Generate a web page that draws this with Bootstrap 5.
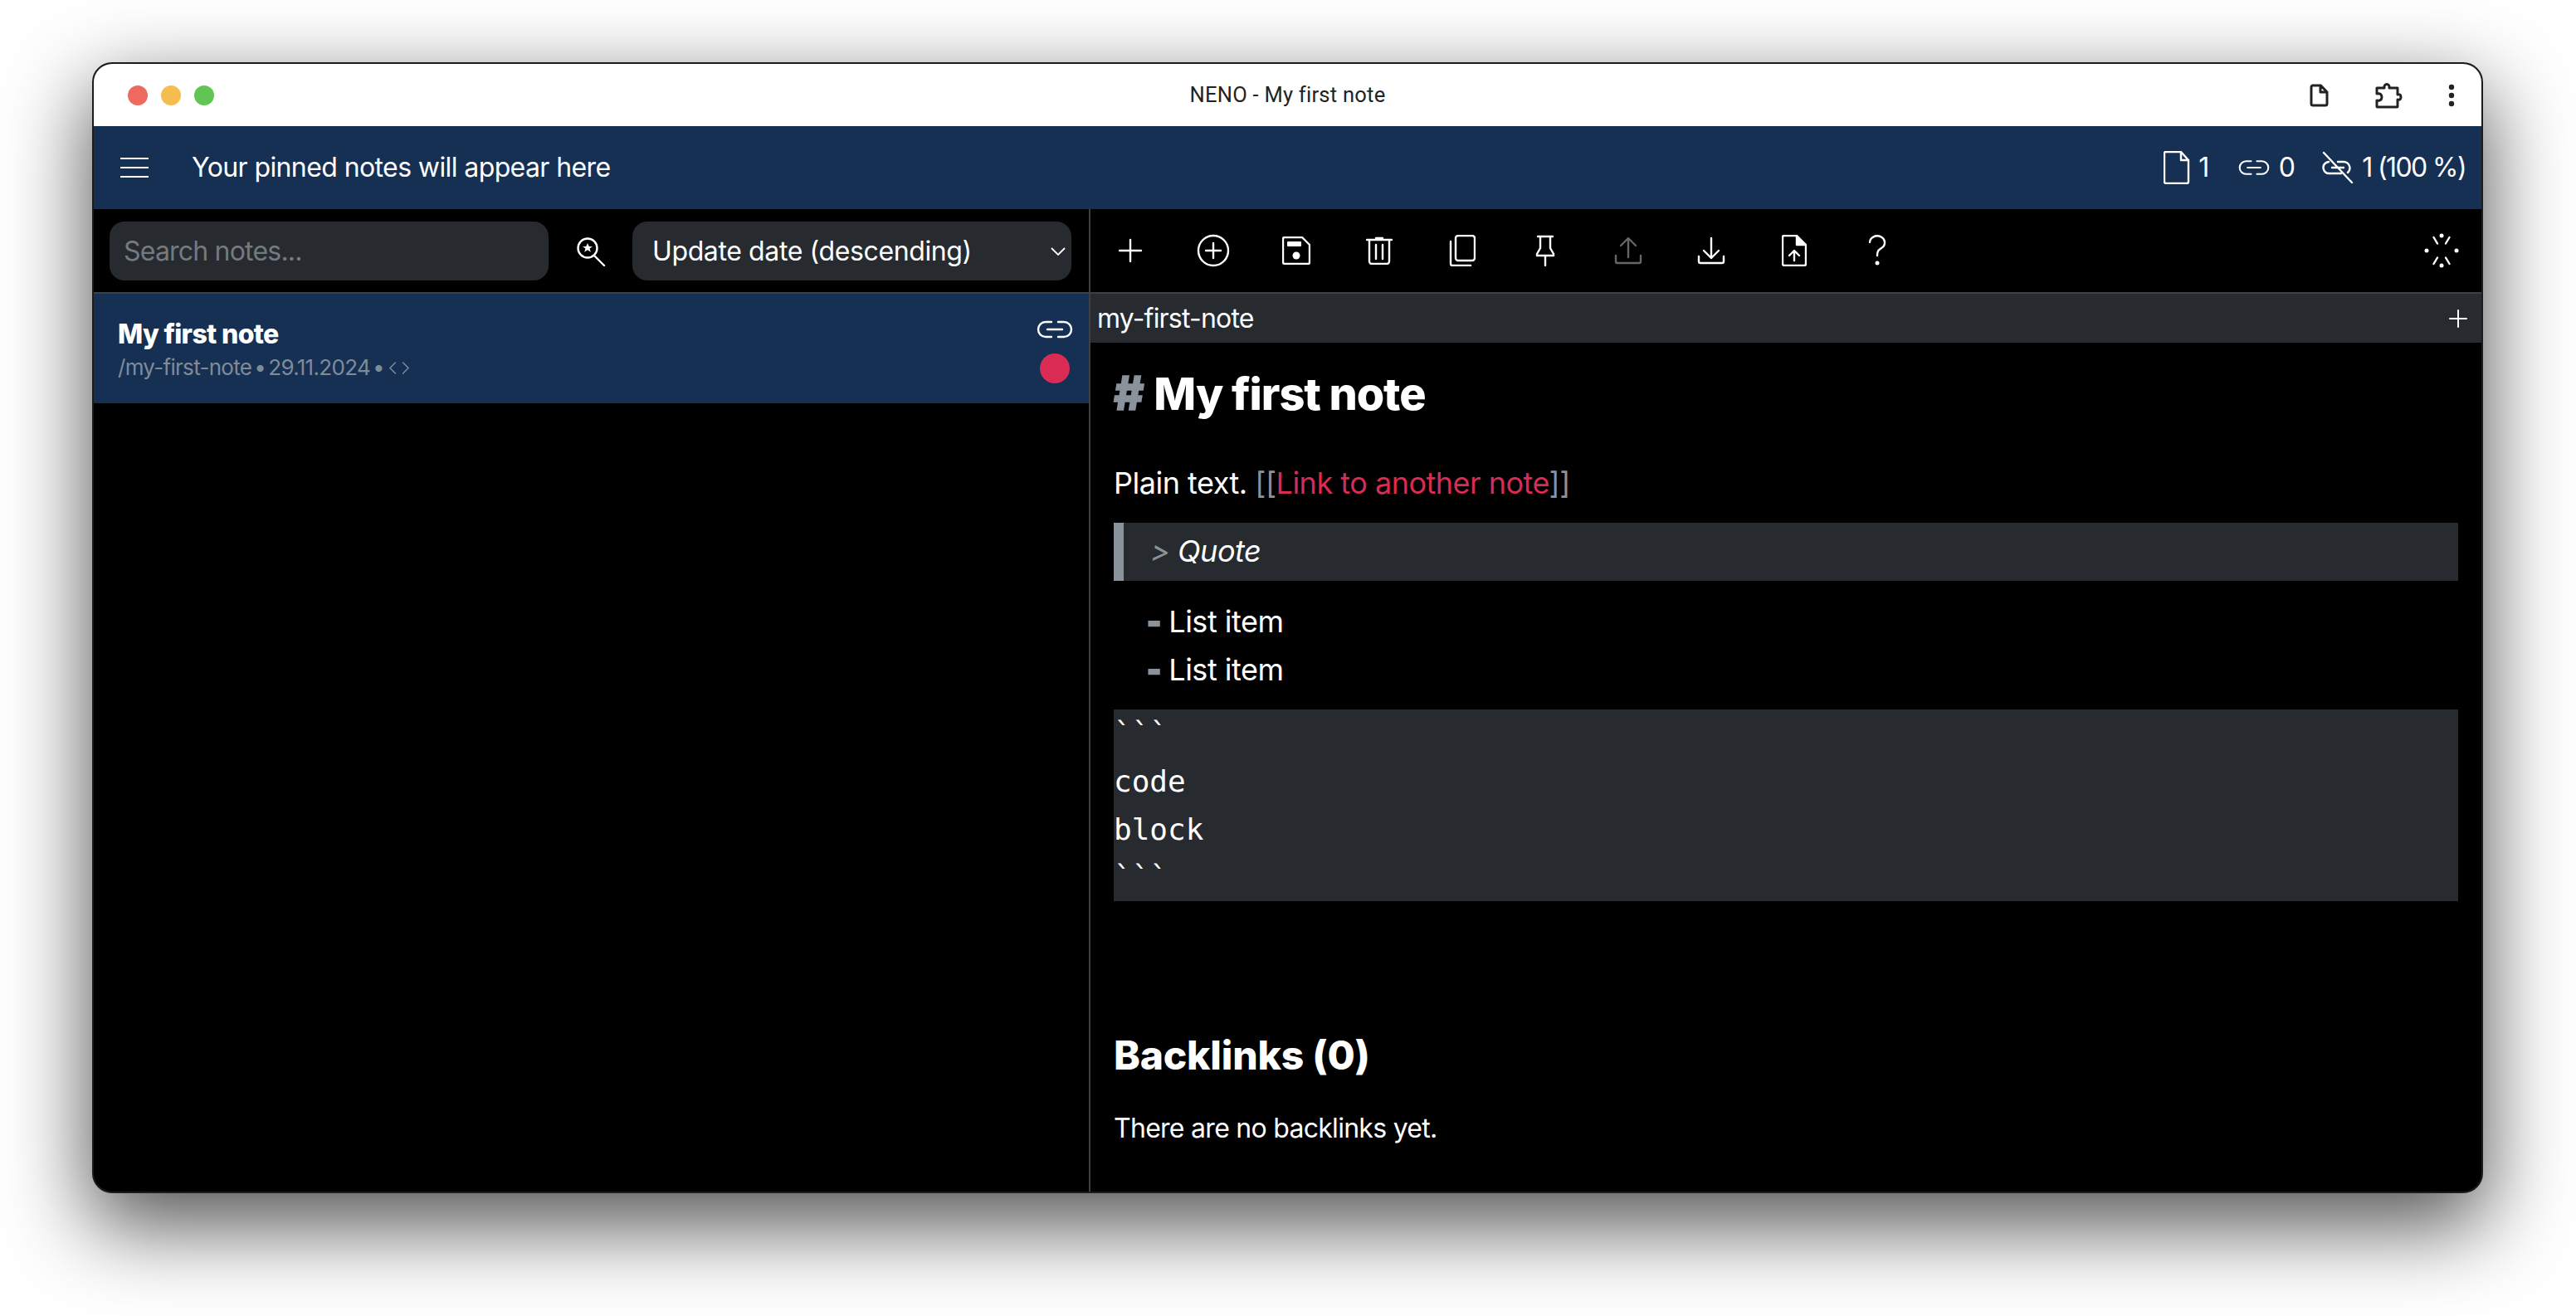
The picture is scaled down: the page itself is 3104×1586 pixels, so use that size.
<!doctype html>
<html lang="en">
<head>
<meta charset="utf-8">
<title>NENO - My first note</title>
<link href="https://cdn.jsdelivr.net/npm/bootstrap@5.3.0/dist/css/bootstrap.min.css" rel="stylesheet">
<style>
html,body{background:#fff;height:100%;margin:0;overflow:hidden}
body{font-family:Inter,"Liberation Sans",sans-serif;letter-spacing:-.48px}
svg{display:block;flex:none}
.ic{fill:none;stroke:currentColor;stroke-width:2.4;stroke-linecap:round;stroke-linejoin:round}
.win{margin:75px 0 0 111px;width:2881px;height:1363px;border:2px solid #1b1b1b;border-radius:24px;overflow:hidden;background:#000;color:#fff;box-shadow:0 36px 100px 4px rgba(0,0,0,.67)}
.tbar{height:75px;background:#fff;color:#222;padding:0 32px 0 41px}
.dot{width:24px;height:24px;border-radius:50%}
.title{font:400 25.5px Roboto,sans-serif;letter-spacing:.01em;color:#222;margin-top:-1px}
.hdr{height:100px;background:#163054;padding:0 19px 0 32px}
.pinned{font-size:32px;margin-left:52px;letter-spacing:-.6px}
.stat{font-size:32px;line-height:1;letter-spacing:-1.6px}
.main{height:calc(100% - 175px)}
.lpane{width:1201px;border-right:2px solid #3d4146}
.srow{height:100px;padding:15px 21px 14px 19px}
.field{height:71px;width:529px;background-color:#272a2f;border:0;border-radius:18px;color:#fff;font-size:32px}
input.field{padding:0 17px;letter-spacing:-.8px}
input.field::placeholder{color:#757a80;opacity:1}
select.field{padding:0 24px;letter-spacing:-.38px;--bs-form-select-bg-img:none;background-position:right 6px center;background-size:20px 14px;background-image:url("data:image/svg+xml,%3csvg xmlns='http://www.w3.org/2000/svg' viewBox='0 0 20 14'%3e%3cpath fill='none' stroke='%23fff' stroke-width='1.8' d='M2 3l8 8 8-8'/%3e%3c/svg%3e")}
.item{height:134px;background:#163054;border-top:2px solid #3d4146;padding:4px 19px 0 29px}
.ititle{font-size:32px;font-weight:800;line-height:40px;letter-spacing:-.66px}
.isub{font-size:26px;color:#808b98;line-height:36px;margin-top:2px;letter-spacing:-.7px}
.sep{width:20px;text-align:center}
.side{margin-top:4px}
.redd{width:36px;height:36px;border-radius:50%;background:#d92b53;margin-top:18px}
.tools{height:100px;margin:0 -2px}
.tb{width:100px;height:100px;padding:0;border:0;border-radius:0;color:#fff}
.tb.off{color:#666}
.slug{height:61px;background:#272a2f;border-top:2px solid #3d4146;font-size:32px;padding:0 17px 0 8px;line-height:1;letter-spacing:-.8px}
.doc{padding:33px 28px 0 28px}
.h-a{font-size:54px;font-weight:800;line-height:58px;height:58px;margin:0;letter-spacing:-1.08px}
.hash{font-size:56px;line-height:1;margin-right:2px;-webkit-text-stroke:1.5px #8a929c}
.gr{color:#8a929c}
.para{font-size:36px;line-height:58px;margin:49px 0 0;letter-spacing:-.5px}
.lnk{color:#d92b53}
.qt{height:70px;margin-top:19px;background:#272a2f;border-left:12px solid #8a929c;padding-left:32px;font-size:36px;font-style:italic;line-height:68px}
.li-box{margin:20px 0 19px;padding-left:40px;font-size:36px;line-height:58px}
.dash{font-weight:900;-webkit-text-stroke:2px #8a929c}
.code{background:#272a2f;font:400 36px/57.75px "DejaVu Sans Mono",monospace;letter-spacing:0;margin:0;height:231px;overflow:hidden;color:#fff;white-space:pre}
.h-b{font-size:48px;font-weight:800;line-height:58px;margin:157px 0 0;letter-spacing:-.2px}
.para-b{font-size:32px;line-height:48px;margin:35px 0 0;letter-spacing:-.72px}
</style>
</head>
<body>
<svg width="0" height="0" class="position-absolute">
  <symbol id="link" viewBox="0 0 44 22"><path d="M18 2H11a9 9 0 0 0 0 18h7M26 2h7a9 9 0 0 1 0 18h-7M13 11h18"/></symbol>
  <symbol id="plus" viewBox="0 0 40 40"><path d="M20 7v26M7 20h26"/></symbol>
</svg>
<div class="win">
  <div class="tbar d-flex align-items-center position-relative">
    <div class="d-flex" style="gap:16px">
      <span class="dot" style="background:#ee6a5f"></span>
      <span class="dot" style="background:#f5bd4f"></span>
      <span class="dot" style="background:#61c554"></span>
    </div>
    <div class="title position-absolute top-50 start-50 translate-middle">NENO - My first note</div>
    <div class="ms-auto d-flex align-items-center">
      <svg class="ic" width="24" height="28" viewBox="0 0 24 28" style="stroke-width:3"><path d="M3.5 2h10l7.5 8v14a2 2 0 0 1-2 2H4a2 2 0 0 1-2-2V4a2 2 0 0 1 1.500-2zM13 2v8h8"/></svg>
      <svg class="ic" width="36" height="34" viewBox="0 0 36 34" style="margin-left:53px;stroke-width:3"><path d="M4 8h9c-1-6 7-6 6 0h10v8c3-1 4 1 4 3s-1 4-4 3v8a1 1 0 0 1-1 1H5a1 1 0 0 1-1-1v-7c4 1 6-1 6-4s-2-5-6-4z"/></svg>
      <svg width="8" height="28" viewBox="0 0 8 28" style="margin-left:54px" fill="currentColor"><circle cx="4" cy="4" r="3.200"/><circle cx="4" cy="14" r="3.200"/><circle cx="4" cy="24" r="3.200"/></svg>
    </div>
  </div>

  <div class="hdr d-flex align-items-center">
    <svg width="34" height="24" viewBox="0 0 34 24" fill="#fff"><rect y="0" width="34" height="2"/><rect y="11" width="34" height="2"/><rect y="22" width="34" height="2"/></svg>
    <div class="pinned">Your pinned notes will appear here</div>
    <div class="ms-auto d-flex align-items-center stat">
      <svg class="ic" width="32" height="40" viewBox="0 0 32 40"><path d="M3 1h18l9 10v26a2 2 0 0 1-2 2H3a2 2 0 0 1-2-2V3a2 2 0 0 1 2-2zM21 1v10h9"/></svg>
      <span style="margin-left:10px">1</span>
      <svg class="ic" width="38" height="20" style="margin-left:36px"><use href="#link"/></svg>
      <span style="margin-left:11px">0</span>
      <svg class="ic" width="40" height="40" viewBox="0 0 40 40" style="margin-left:33px"><path d="M20 13h7a7.500 7.500 0 0 1 5 13M24 27H10a7 7 0 0 1-4-13l3-1M13 20h14M3 2l34 36"/></svg>
      <span style="margin-left:9px">1 (100 %)</span>
    </div>
  </div>

  <div class="main d-flex">
    <div class="lpane">
      <div class="srow d-flex align-items-center justify-content-between">
        <input class="form-control field" placeholder="Search notes...">
        <svg class="ic" width="36" height="36" viewBox="0 0 36 36"><circle cx="14" cy="14" r="11.500"/><path d="M22 23l12 12"/><path d="M14 8l1.800 4h4l-3.200 2.600 1.200 4.200-3.800-2.500-3.800 2.500 1.200-4.200-3.200-2.600h4z" fill="#fff" stroke="none"/></svg>
        <select class="form-select field"><option>Update date (descending)</option></select>
      </div>
      <div class="item d-flex align-items-center justify-content-between">
        <div>
          <div class="ititle">My first note</div>
          <div class="isub d-flex align-items-center"><span>/my-first-note</span><span class="sep">•</span><span>29.11.2024</span><span class="sep">•</span>
            <svg class="ic" width="24" height="15" viewBox="0 0 26 16" style="margin-left:3px;stroke-width:1.600"><path d="M8 1L1 8l7 7M18 1l7 7-7 7"/></svg>
          </div>
        </div>
        <div class="side d-flex flex-column align-items-center">
          <svg class="ic" width="44" height="22"><use href="#link"/></svg>
          <span class="redd"></span>
        </div>
      </div>
    </div>

    <div class="flex-grow-1">
      <div class="tools d-flex align-items-center">
        <button class="btn tb d-flex align-items-center justify-content-center" aria-label="New"><svg class="ic" width="40" height="40"><use href="#plus"/></svg></button>
        <button class="btn tb d-flex align-items-center justify-content-center" aria-label="Add"><svg class="ic" width="40" height="40" viewBox="0 0 40 40"><circle cx="20" cy="20" r="18"/><path d="M20 11v18M11 20h18"/></svg></button>
        <button class="btn tb d-flex align-items-center justify-content-center" aria-label="Save"><svg class="ic" width="34" height="34" viewBox="0 0 34 34"><path d="M3 1h21l9 9v21a2 2 0 0 1-2 2H3a2 2 0 0 1-2-2V3a2 2 0 0 1 2-2z"/><rect x="6" y="6" width="17" height="6" rx="1" fill="#fff" stroke="none"/><circle cx="17" cy="23" r="4.500" fill="#fff" stroke="none"/></svg></button>
        <button class="btn tb d-flex align-items-center justify-content-center" aria-label="Delete"><svg class="ic" width="32" height="34" viewBox="0 0 32 34"><path d="M1 4h30M12 2h8M4 4v26a3 3 0 0 0 3 3h18a3 3 0 0 0 3-3V4M12 10v17M20 10v17"/></svg></button>
        <button class="btn tb d-flex align-items-center justify-content-center" aria-label="Duplicate"><svg class="ic" width="32" height="38" viewBox="0 0 32 38"><rect x="8" y="1" width="23" height="30" rx="3"/><path d="M2 8v27a2 2 0 0 0 2 2h22"/></svg></button>
        <button class="btn tb d-flex align-items-center justify-content-center" aria-label="Pin"><svg class="ic" width="24" height="38" viewBox="0 0 24 38"><path d="M3 2h18M6 2v14l-4 7v2h20v-2l-4-7V2M12 25v12"/></svg></button>
        <button class="btn tb off d-flex align-items-center justify-content-center" aria-label="Upload"><svg class="ic" width="34" height="34" viewBox="0 0 34 34"><path d="M17 25V3M8 11l9-9 9 9M2 23v7a2 2 0 0 0 2 2h26a2 2 0 0 0 2-2v-7"/></svg></button>
        <button class="btn tb d-flex align-items-center justify-content-center" aria-label="Download"><svg class="ic" width="34" height="34" viewBox="0 0 34 34"><path d="M17 2v24M8 17l9 9 9-9M2 24v6a2 2 0 0 0 2 2h26a2 2 0 0 0 2-2v-6"/></svg></button>
        <button class="btn tb d-flex align-items-center justify-content-center" aria-label="Replace"><svg class="ic" width="30" height="38" viewBox="0 0 30 38"><path d="M3 1h15l11 11v23a2 2 0 0 1-2 2H3a2 2 0 0 1-2-2V3a2 2 0 0 1 2-2z"/><path d="M18 1v11h11" fill="#fff"/><path d="M15 31V20M9 25l6-6 6 6"/></svg></button>
        <button class="btn tb d-flex align-items-center justify-content-center" aria-label="Help"><svg class="ic" width="22" height="38" viewBox="0 0 22 38"><path d="M2 9a9 8 0 1 1 14 7c-3 2-5 3-5 9"/><circle cx="11" cy="34" r="2.500" fill="#fff" stroke="none"/></svg></button>
        <button class="btn tb ms-auto d-flex align-items-center justify-content-center" aria-label="Status"><svg class="ic" width="42" height="42" viewBox="-21 -21 42 42"><circle cy="-18" r="2.500" fill="#fff" stroke="none"/><circle cy="18" r="2.500" fill="#fff" stroke="none"/><circle cx="-18" r="2.500" fill="#fff" stroke="none"/><circle cx="18" r="2.500" fill="#fff" stroke="none"/><path d="M-5 -8.500L-9.500 -16M5 -8.500L9.500 -16M-5 8.500L-9.500 16M5 8.500L9.500 16"/></svg></button>
      </div>
      <div class="slug d-flex align-items-center justify-content-between">
        <span>my-first-note</span>
        <svg class="ic" width="22" height="22" viewBox="0 0 22 22" style="stroke-width:2"><path d="M11 1v20M1 11h20"/></svg>
      </div>
      <div class="doc">
        <h1 class="h-a"><span class="gr hash">#</span> My first note</h1>
        <p class="para">Plain text. <span class="gr">[[</span><span class="lnk">Link to another note</span><span class="gr">]]</span></p>
        <div class="qt"><span class="gr">&gt;</span> Quote</div>
        <div class="li-box">
          <div><span class="gr dash">-</span> List item</div>
          <div><span class="gr dash">-</span> List item</div>
        </div>
        <pre class="code">```
code
block
```</pre>
        <h2 class="h-b">Backlinks (0)</h2>
        <p class="para-b">There are no backlinks yet.</p>
      </div>
    </div>
  </div>
</div>
</body>
</html>
